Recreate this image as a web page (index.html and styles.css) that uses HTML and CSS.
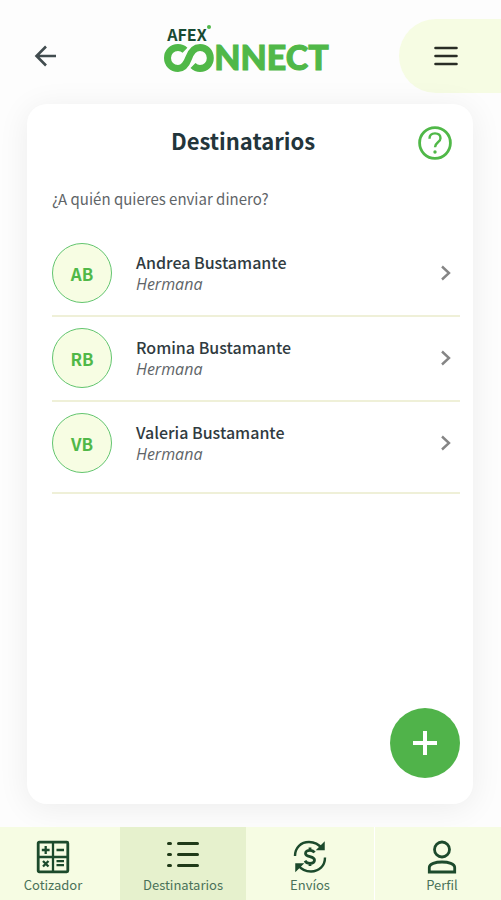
FILE: index.html
```html
<!DOCTYPE html>
<html lang="es">
<head>
<meta charset="utf-8">
<meta name="viewport" content="width=device-width, initial-scale=1">
<title>Destinatarios</title>
<link rel="stylesheet" href="styles.css">
</head>
<body>
<div class="app">
  <header class="header">
    <button class="back" type="button" aria-label="Volver">
      <svg width="24" height="24" viewBox="0 0 24 24" fill="none" stroke="#414c4f" stroke-width="2.6"><path d="M22 12H3M12 2.500L2.500 12L12 21.500"/></svg>
    </button>
    <div class="logo">
      <div class="logo-top">AFEX<span class="logo-dot"></span></div>
      <div class="logo-main">
        <svg width="50" height="28" viewBox="0 0 50 28" fill="none" stroke="#50b848" stroke-width="7" aria-hidden="true"><path d="M21 6.200C19 4.300 16.800 3.500 14 3.500C8 3.500 3.500 8 3.500 14S8 24.500 14 24.500C20 24.500 22.500 20 24.700 14C27 7.500 30 3.500 36 3.500C42 3.500 46.300 8 46.300 14S42 24.500 36 24.500C33 24.500 31 23.500 29 21.500"/></svg>
        <span>NNECT</span>
      </div>
    </div>
    <button class="menu" type="button" aria-label="Menú">
      <svg width="24" height="20" viewBox="0 0 24 20" stroke="#292d25" stroke-width="2.600" stroke-linecap="round"><path d="M1.500 2H22.500M1.500 10H22.500M1.500 18H22.500"/></svg>
    </button>
  </header>

  <main class="card">
    <div class="title-row">
      <h1>Destinatarios</h1>
      <button class="help" type="button" aria-label="Ayuda">
        <svg width="34" height="34" viewBox="0 0 34 34" fill="none" stroke="#50b848"><circle cx="17" cy="17" r="15.400" stroke-width="2.800"/><path d="M11.500 12.800C11.500 9.300 13.700 7.400 17 7.400S22.500 9.300 22.500 12.300C22.500 16.300 17 16.300 17 21.200" stroke-width="2.400"/><circle cx="17" cy="26" r="1.700" fill="#50b848" stroke="none"/></svg>
      </button>
    </div>
    <p class="question">¿A quién quieres enviar dinero?</p>
    <ul class="list">
      <li><a class="person" href="#ab"><span class="avatar">AB</span><span class="info"><strong>Andrea Bustamante</strong><em>Hermana</em></span><svg class="chevron" width="12" height="16" viewBox="0 0 12 16"><path d="M2 1.500L9 8L2 14.500"/></svg></a></li>
      <li><a class="person" href="#rb"><span class="avatar">RB</span><span class="info"><strong>Romina Bustamante</strong><em>Hermana</em></span><svg class="chevron" width="12" height="16" viewBox="0 0 12 16"><path d="M2 1.500L9 8L2 14.500"/></svg></a></li>
      <li><a class="person" href="#vb"><span class="avatar">VB</span><span class="info"><strong>Valeria Bustamante</strong><em>Hermana</em></span><svg class="chevron" width="12" height="16" viewBox="0 0 12 16"><path d="M2 1.500L9 8L2 14.500"/></svg></a></li>
    </ul>
    <button class="add" type="button" aria-label="Agregar destinatario">
      <svg width="24" height="24" viewBox="0 0 24 24" stroke="#fff" stroke-width="4"><path d="M12 0V24M0 12H24"/></svg>
    </button>
  </main>

  <nav class="tabs">
    <a class="tab tab-first" href="#cotizador">
      <svg width="34" height="34" viewBox="0 0 34 34" fill="none" stroke="#1c4a2c" stroke-width="2"><rect x="2.200" y="2.200" width="29.600" height="29.600" rx="1" stroke-width="2.800"/><path d="M17 2V32M2 17H32M5.800 10H13.600M9.700 6.100V13.900M20.500 10H28M7 21L12.500 26.500M12.500 21L7 26.500M20.500 21.200H28M20.500 25.200H28" stroke-width="2.300"/></svg>
      <span>Cotizador</span>
    </a>
    <a class="tab active" href="#destinatarios" aria-current="page">
      <svg width="34" height="34" viewBox="0 0 34 34" stroke="#203a19" stroke-width="3" stroke-linecap="round"><path d="M2.500 3.500H4.500M12.500 3.500H31.500M2.500 14.500H4.500M12.500 14.500H31.500M2.500 25.500H4.500M12.500 25.500H31.500"/></svg>
      <span>Destinatarios</span>
    </a>
    <a class="tab" href="#envios">
      <svg width="34" height="34" viewBox="0 0 34 34" fill="none" stroke="#1c4a2c" stroke-width="2.400"><path d="M2 16C2 7.500 8 2 16 2C22 2 26 4.500 29 8.500M32 17.500C32 26 26 31.500 18 31.500C12.500 31.500 8 29 5 25"/><path d="M31 3V9.500H24.500ZM3 30.500V24H9.500Z" fill="#1c4a2c" stroke-width="1.500"/><path d="M21.500 12.500C20.500 10.800 19 10.300 17 10.300C14.300 10.300 12.500 11.400 12.500 13.400C12.500 17.600 21.500 15.700 21.500 20C21.500 22 19.700 23.300 17 23.300C14.700 23.300 13 22.500 12 20.700M17 7.500V10.500M17 23V26" stroke-width="2.800"/></svg>
      <span>Envíos</span>
    </a>
    <a class="tab tab-last" href="#perfil">
      <svg width="34" height="34" viewBox="0 0 34 34" fill="none" stroke="#1c4a2c" stroke-width="2.800"><circle cx="17" cy="9.500" r="7.500"/><path d="M4.300 32V27.500C4.300 23.800 10.500 22 17 22S29.700 23.800 29.700 27.500V32Z"/></svg>
      <span>Perfil</span>
    </a>
  </nav>
</div>
</body>
</html>
```
FILE: styles.css
```css
* { box-sizing: border-box; }

body {
  margin: 0;
  background: #fdfdfd;
  color: #303b3f;
  font-family: "Noto Sans CJK SC", "Noto Sans", sans-serif;
}

button {
  border: 0;
  padding: 0;
  background: none;
  cursor: pointer;
}

a { color: inherit; text-decoration: none; }
svg { display: block; flex: none; }

.app {
  display: flex;
  flex-direction: column;
  min-height: 100vh;
}

.header {
  display: grid;
  grid-template-columns: 1fr auto 1fr;
  align-items: start;
  padding-top: 19px;
  height: 104px;
}

.back {
  justify-self: start;
  margin: 25px 0 0 34px;
}

.logo { margin: 6px 8px 0 0; }

.logo-top {
  display: flex;
  padding-left: 3px;
  color: #184a32;
  font-size: 16px;
  font-weight: 700;
  line-height: 19px;
}

.logo-dot {
  width: 4px;
  height: 4px;
  border-radius: 50%;
  background: #50b848;
}

.logo-main {
  display: flex;
  align-items: center;
  height: 28px;
  color: #50b848;
  font-family: Lato, sans-serif;
  font-size: 34px;
  font-weight: 900;
  line-height: 26px;
  -webkit-text-stroke: 1px #50b848;
}

.logo-main span { padding-bottom: 2px; }

.menu {
  justify-self: end;
  width: 102px;
  height: 74px;
  padding-left: 35px;
  border-radius: 37px 0 0 37px;
  background: #f6fce3;
}

.card {
  display: flex;
  flex: 1;
  flex-direction: column;
  margin: 0 28px 23px 27px;
  padding: 22px 13px 26px 25px;
  border-radius: 20px;
  background: #fff;
  box-shadow: 0 4px 32px rgba(0, 0, 0, 0.07);
}

.title-row {
  display: grid;
  grid-template-columns: 16px 1fr 34px;
  align-items: start;
  padding-right: 8px;
}

h1 {
  grid-column: 2;
  margin: 0;
  color: #23353b;
  font-size: 22px;
  font-weight: 700;
  line-height: 28px;
  text-align: center;
}

.question {
  margin: 27px 0 21px;
  color: #5f6568;
  font-size: 15px;
  font-weight: 400;
  line-height: 24px;
}

.list {
  margin: 0;
  padding: 0;
  list-style: none;
}

.person {
  display: flex;
  align-items: center;
  gap: 24px;
  padding: 11px 8px 12px 0;
  border-bottom: 2px solid #eff0d8;
}

.list li:last-child .person { padding-bottom: 19px; }

.avatar {
  display: grid;
  place-items: center;
  width: 60px;
  height: 60px;
  border: 1px solid #63c56f;
  border-radius: 50%;
  background: #f7fde3;
  color: #50b848;
  font-size: 17px;
  font-weight: 700;
}

.info {
  display: flex;
  flex: 1;
  flex-direction: column;
  line-height: 22px;
}

.info strong {
  font-size: 16px;
  font-weight: 500;
}

.info em {
  color: #5f6568;
  font-family: "Open Sans", sans-serif;
  font-size: 16px;
}

.chevron {
  fill: none;
  stroke: #858585;
  stroke-width: 2.4;
}

.add {
  display: grid;
  place-items: center;
  align-self: flex-end;
  width: 70px;
  height: 70px;
  margin-top: auto;
  border-radius: 50%;
  background: #50b34a;
}

.tabs {
  display: grid;
  grid-template-columns: 120fr 126fr 128fr 127fr;
  height: 73px;
  background: #f6fce3;
}

.tab {
  display: flex;
  flex-direction: column;
  align-items: center;
  gap: 2px;
  padding-top: 13px;
  color: #4a7259;
  font-size: 13px;
  line-height: 18px;
}

.tab-first { padding-right: 14px; }
.tab-last { padding-left: 8px; border-left: 1px solid #fff; }
.active { background: #e6f1cd; }
```
